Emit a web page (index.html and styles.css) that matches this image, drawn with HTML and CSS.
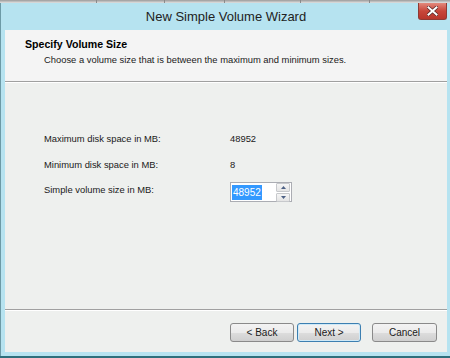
FILE: index.html
```html
<!DOCTYPE html>
<html lang="en">
<head>
  <meta charset="UTF-8">
  <title>New Simple Volume Wizard</title>
  <link rel="stylesheet" href="styles.css">
</head>
<body>

  <div class="list-header">
    <span class="col c1"></span>
    <span class="col c2"></span>
    <span class="col c3"></span>
    <span class="col c4"></span>
    <span class="col c5"></span>
    <span class="col c6"></span>
  </div>

  <div class="wizard">
    <div class="title-bar">
      <span></span>
      <span class="title">New Simple Volume Wizard</span>
      <button class="close-btn" aria-label="Close">
        <svg width="11" height="10" viewBox="0 0 11 10">
          <path d="M1.5 1.5 L9.5 8.5 M9.5 1.5 L1.5 8.5" stroke="#5a2a2a" stroke-width="3.6" stroke-linecap="square"/>
          <path d="M1.5 1.5 L9.5 8.5 M9.5 1.5 L1.5 8.5" stroke="#fff" stroke-width="2" stroke-linecap="square"/>
        </svg>
      </button>
    </div>

    <div class="client">
      <div class="page-header">
        <h1>Specify Volume Size</h1>
        <p>Choose a volume size that is between the maximum and minimum sizes.</p>
      </div>

      <div class="page-body">
        <div class="size-grid">
          <span>Maximum disk space in MB:</span>
          <span>48952</span>
          <span>Minimum disk space in MB:</span>
          <span>8</span>
          <label for="size">Simple volume size in MB:</label>
          <div class="spin">
            <span class="spin-value" id="size"><span class="selected">48952</span></span>
            <div class="spin-btns">
              <span class="spin-btn">
                <svg width="5" height="3" viewBox="0 0 5 3"><path d="M2.5 0 L5 3 L0 3 Z" fill="#4d6185"/></svg>
              </span>
              <span class="spin-btn">
                <svg width="5" height="3" viewBox="0 0 5 3"><path d="M0 0 L5 0 L2.5 3 Z" fill="#4d6185"/></svg>
              </span>
            </div>
          </div>
        </div>
      </div>

      <div class="page-footer">
        <button class="btn">&lt; Back</button>
        <button class="btn btn-default">Next &gt;</button>
        <button class="btn btn-cancel">Cancel</button>
      </div>
    </div>
  </div>

</body>
</html>
```

FILE: styles.css
```css
body {
  margin: 0;
  padding: 0;
  width: 450px;
  height: 358px;
  overflow: hidden;
  background: #2e6f7c;
  font-family: 'Liberation Sans', Arial, sans-serif;
  font-size: 9.4px;
  color: #1a1a1a;
}

.list-header {
  display: flex;
  height: 3px;
  background: #d6d6d6;
}

.col {
  border-right: 1px solid #8a8a8a;
  background: linear-gradient(#9a9a9a, #e2e2e2);
}

.c1 { width: 96px; }
.c2 { width: 67px; }
.c3 { width: 59px; }
.c4 { width: 75px; }
.c5 { width: 68px; }
.c6 { flex: 1; border-right: none; }

.wizard {
  display: flex;
  flex-direction: column;
  height: 353px;
  background: #b6e3f0;
  border-left: 1px solid #6d9aa6;
  padding: 0 3px 4px 4px;
  box-sizing: border-box;
}

.title-bar {
  display: grid;
  grid-template-columns: 1fr auto 1fr;
  align-items: start;
  height: 27px;
}

.title {
  font-family: 'Liberation Sans', Arial, sans-serif;
  font-size: 13px;
  color: #222;
  line-height: 28px;
}

.close-btn {
  justify-self: end;
  width: 29px;
  height: 17px;
  margin: 0;
  padding: 0;
  border: 1px solid #8e3a34;
  border-top: none;
  border-radius: 0 0 3px 3px;
  background: linear-gradient(#e2897c, #c8463a 50%, #b8362c);
  display: flex;
  align-items: center;
  justify-content: center;
}

.client {
  flex: 1;
  display: flex;
  flex-direction: column;
  background: #eef0ee;
}

.page-header {
  height: 52px;
  padding: 8px 0 0 20px;
  box-sizing: border-box;
  background: #f4f4f4;
  border-bottom: 1px solid #a0a0a0;
  box-shadow: 0 1px 0 #fff;
}

h1 {
  margin: 0;
  font-size: 10.6px;
  font-weight: bold;
  line-height: 13px;
  color: #000;
}

.page-header p {
  margin: 2px 0 0 19px;
  line-height: 13px;
}

.page-body {
  flex: 1;
  padding: 44px 0 0 39px;
  border-bottom: 1px solid #a0a0a0;
  box-shadow: 0 1px 0 #fff;
}

.size-grid {
  display: grid;
  grid-template-columns: 186px auto;
  grid-auto-rows: 25.5px;
  align-items: center;
}

.spin {
  display: flex;
  align-items: center;
  width: 62px;
  height: 20px;
  margin-top: 5px;
  box-sizing: border-box;
  border: 1px solid #abadb3;
  background: #fff;
  padding: 0 1px;
}

.spin-value {
  flex: 1;
  font-size: 10px;
}

.selected {
  background: #3399ff;
  color: #fff;
  padding: 2px 1px;
}

.spin-btns {
  display: flex;
  flex-direction: column;
  gap: 1px;
}

.spin-btn {
  display: flex;
  align-items: center;
  justify-content: center;
  width: 12px;
  height: 7px;
  border: 1px solid #c7c9cc;
  border-radius: 1px;
  background: linear-gradient(#f6f6f6, #e4e4e4);
}

.page-footer {
  display: flex;
  justify-content: flex-end;
  align-items: flex-start;
  height: 42px;
  padding: 13px 10px 0 0;
  box-sizing: border-box;
}

.btn {
  width: 64px;
  height: 19px;
  margin: 0;
  padding: 0;
  font-family: inherit;
  font-size: 10px;
  color: #1a1a1a;
  border: 1px solid #8a8a8a;
  border-radius: 3px;
  background: linear-gradient(#f3f3f3, #ebebeb 50%, #dddddd 51%, #cfcfcf);
}

.btn + .btn {
  margin-left: 3px;
}

.btn-default {
  border-color: #3c7fb1;
  box-shadow: inset 0 0 0 1px #cfe9f7;
}

.btn-cancel {
  width: 65px;
  margin-left: 11px !important;
}
```
